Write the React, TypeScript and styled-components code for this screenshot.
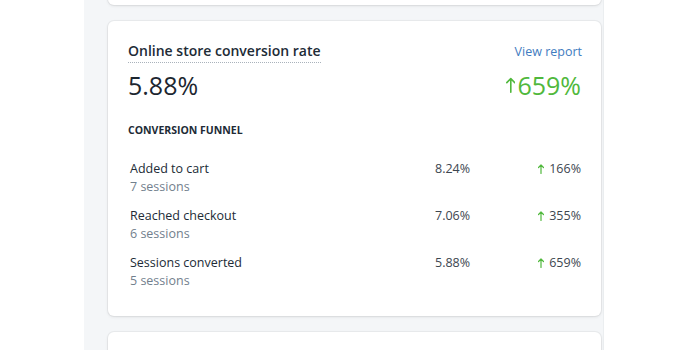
import React from 'react';
import styled, { createGlobalStyle } from 'styled-components';

const Global = createGlobalStyle`
  html, body { margin: 0; padding: 0; background: #fff; }
  body { font-family: "Open Sans", "Noto Sans", sans-serif; color: #212b36; }
`;

const Column = styled.div`
  margin-left: 84px;
  width: 493px;
  margin-top: -35px;
  padding: 0 2px 0 24px;
  background: #f4f6f8;
  height: 420px;
  display: flex;
  flex-direction: column;
  gap: 16px;
  box-shadow: 1px 0 0 #ebeef0;
`;

const Card = styled.div<{ h?: number }>`
  background: #fff;
  border-radius: 6px;
  box-shadow: 0 0 0 1px rgba(63, 63, 68, 0.05), 0 1px 3px rgba(63, 63, 68, 0.12);
  min-height: ${(p) => (p.h ? `${p.h}px` : 'auto')};
`;

const Body = styled.div`
  padding: 20px 20px 26px 20px;
`;

const Head = styled.div`
  display: flex;
  justify-content: space-between;
  align-items: baseline;
`;

const Title = styled.div`
  font-size: 14px;
  font-weight: 600;
  line-height: 20px;
  border-bottom: 1px dotted #a9b2bb;
  padding-bottom: 1px;
`;

const Link = styled.a`
  font-size: 12.5px;
  color: #3f7cc0;
  text-decoration: none;
  margin-right: -1px;
`;

const Big = styled.div`
  display: flex;
  justify-content: space-between;
  align-items: center;
  margin-top: 5px;
`;

const BigNum = styled.div<{ color?: string }>`
  font-size: 25px;
  line-height: 34px;
  color: ${(p) => p.color || '#1c2630'};
  display: flex;
  align-items: center;
  gap: 2px;
`;

const Heading = styled.div`
  margin-top: 20px;
  font-size: 10.5px;
  font-weight: 700;
  line-height: 16px;
  text-transform: uppercase;
`;

const Funnel = styled.div`
  margin-top: 22px;
  padding-left: 2px;
  display: flex;
  flex-direction: column;
  gap: 11px;
`;

const Row = styled.div`
  display: grid;
  grid-template-columns: 305px 1fr auto;
  align-items: start;
  font-size: 12.5px;
  line-height: 18px;
`;

const Sub = styled.div`
  color: #72808d;
`;

const Pct = styled.div`
  color: #3d4650;
`;

const Change = styled.div`
  display: flex;
  justify-content: flex-end;
  align-items: center;
  gap: 5px;
  color: #3d4650;
`;

const Arrow = ({ size, w }: { size: number; w: number }) => (
  <svg width={size * 0.6} height={size} viewBox="0 0 12 20" fill="none">
    <path d="M6 19V2M1 7l5-5 5 5" stroke="#50b83c" strokeWidth={w} strokeLinecap="round" strokeLinejoin="round" />
  </svg>
);

const rows = [
  { name: 'Added to cart', sessions: '7 sessions', pct: '8.24%', change: '166%' },
  { name: 'Reached checkout', sessions: '6 sessions', pct: '7.06%', change: '355%' },
  { name: 'Sessions converted', sessions: '5 sessions', pct: '5.88%', change: '659%' },
];

export default function App() {
  return (
    <>
      <Global />
      <Column>
        <Card h={40} />
        <Card>
          <Body>
            <Head>
              <Title>Online store conversion rate</Title>
              <Link href="#">View report</Link>
            </Head>
            <Big>
              <BigNum>5.88%</BigNum>
              <BigNum color="#50b83c">
                <Arrow size={16} w={2} />
                659%
              </BigNum>
            </Big>
            <Heading>Conversion funnel</Heading>
            <Funnel>
              {rows.map((r) => (
                <Row key={r.name}>
                  <div>
                    <div>{r.name}</div>
                    <Sub>{r.sessions}</Sub>
                  </div>
                  <Pct>{r.pct}</Pct>
                  <Change>
                    <Arrow size={10} w={2.4} />
                    {r.change}
                  </Change>
                </Row>
              ))}
            </Funnel>
          </Body>
        </Card>
        <Card h={60} />
      </Column>
    </>
  );
}
